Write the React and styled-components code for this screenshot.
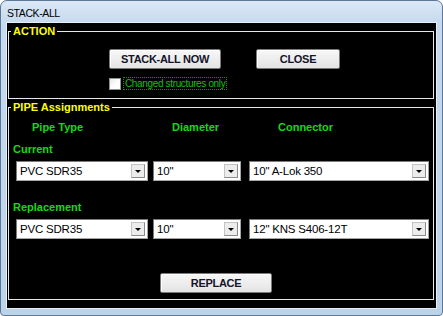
import React from 'react';
import styled, { createGlobalStyle } from 'styled-components';

const Global = createGlobalStyle`
    html, body {
        margin: 0;
        padding: 0;
        background: #ffffff;
    }
    * {
        box-sizing: border-box;
    }
`

const Window = styled.div`
    width: 443px;
    height: 316px;
    display: flex;
    flex-direction: column;
    padding: 0 6px 7px 6px;
    border: 1px solid #5d7896;
    border-radius: 7px 7px 4px 4px;
    background: linear-gradient(to bottom, #dbe8f6 0px, #c6d9ee 22px, #bdd3ea 100%);
    font-family: "Liberation Sans", Arial, sans-serif;
`

const TitleBar = styled.div`
    height: 22px;
    display: flex;
    align-items: center;
    padding-top: 2px;
    font-size: 10.5px;
    letter-spacing: -0.4px;
    color: #000;
`

const Client = styled.div`
    flex: 1;
    display: flex;
    flex-direction: column;
    background: #000;
    padding: 0 2px 0 1px;
    outline: 1px solid #e6eef7;
`

const Group = styled.fieldset`
    margin: ${p => p.$top}px 0 0 0;
    padding: 0 0 ${p => p.$bottom}px 0;
    border: 1px solid #e8e8e8;
    min-width: 0;
    display: flex;
    flex-direction: column;
`

const Legend = styled.legend`
    margin-left: 2px;
    padding: 0 2px;
    height: 14px;
    line-height: 14px;
    font-size: 11px;
    font-weight: bold;
    color: #ffff00;
`

const Row = styled.div`
    display: flex;
    align-items: center;
    margin-top: ${p => p.$top || 0}px;
    padding-left: ${p => p.$left || 0}px;
`

const Button = styled.button`
    width: ${p => p.$width}px;
    height: 20px;
    margin: 0 ${p => p.$gap || 0}px 0 0;
    padding: 0;
    border: 1px solid #7a7a7a;
    border-radius: 2px;
    background: linear-gradient(to bottom, #f7f7f7, #e4e4e4);
    box-shadow: inset 1px 1px 0 #ffffff;
    font-family: "Liberation Sans", Arial, sans-serif;
    font-size: 11px;
    font-weight: bold;
    letter-spacing: -0.3px;
    color: #14142a;
`

const CheckBox = styled.span`
    width: 12px;
    height: 12px;
    border: 1px solid #8e8f8f;
    background: linear-gradient(135deg, #e9e9e9, #ffffff 60%);
    margin-right: 2px;
`

const CheckLabel = styled.span`
    height: 13px;
    padding: 0 1px;
    display: flex;
    align-items: center;
    border: 1px dotted #1f8a1f;
    color: #12c012;
    font-size: 10px;
    letter-spacing: -0.35px;
`

const Heading = styled.span`
    width: ${p => p.$width}px;
    padding-left: ${p => p.$indent}px;
    line-height: 14px;
    font-size: 11px;
    font-weight: bold;
    color: #10dc10;
`

const Combo = styled.div`
    width: ${p => p.$width}px;
    height: 20px;
    margin-right: ${p => p.$gap || 0}px;
    display: flex;
    align-items: stretch;
    padding: 2px;
    border: 1px solid #a5a5a5;
    border-top-color: #7b7b7b;
    border-left-color: #7b7b7b;
    background: #ffffff;
`

const ComboText = styled.span`
    flex: 1;
    padding-left: 1px;
    display: flex;
    align-items: center;
    font-size: 11.5px;
    letter-spacing: -0.2px;
    color: #000;
`

const Arrow = styled.span`
    width: 14px;
    display: flex;
    align-items: center;
    justify-content: center;
    border: 1px solid #c3c3c3;
    border-right-color: #8c8c8c;
    border-bottom-color: #8c8c8c;
    background: #ececec;

    &::after {
        content: "";
        border-left: 3px solid transparent;
        border-right: 3px solid transparent;
        border-top: 3px solid #000;
    }
`

function Select({ value, width, gap }) {
    return (
        <Combo $width={width} $gap={gap}>
            <ComboText>{value}</ComboText>
            <Arrow />
        </Combo>
    )
}

function PipeRow({ top, pipe, diameter, connector }) {
    return (
        <Row $top={top} $left={7}>
            <Select value={pipe} width={132} gap={5} />
            <Select value={diameter} width={88} gap={8} />
            <Select value={connector} width={180} />
        </Row>
    )
}

export default function App() {
    return (
        <>
            <Global />
            <Window>
                <TitleBar>STACK-ALL</TitleBar>
                <Client>
                    <Group $top={1} $bottom={8}>
                        <Legend>ACTION</Legend>
                        <Row $top={11} $left={100}>
                            <Button $width={112} $gap={35}>STACK-ALL NOW</Button>
                            <Button $width={84}>CLOSE</Button>
                        </Row>
                        <Row $top={8} $left={100}>
                            <CheckBox />
                            <CheckLabel>Changed structures only</CheckLabel>
                        </Row>
                    </Group>
                    <Group $top={1} $bottom={6}>
                        <Legend>PIPE Assignments</Legend>
                        <Row $top={6} $left={7}>
                            <Heading $width={137} $indent={16}>Pipe Type</Heading>
                            <Heading $width={96} $indent={19}>Diameter</Heading>
                            <Heading $width={180} $indent={29}>Connector</Heading>
                        </Row>
                        <Row $top={8} $left={4}>
                            <Heading $width={100} $indent={0}>Current</Heading>
                        </Row>
                        <PipeRow top={5} pipe="PVC SDR35" diameter={'10"'} connector={'10" A-Lok 350'} />
                        <Row $top={19} $left={4}>
                            <Heading $width={100} $indent={0}>Replacement</Heading>
                        </Row>
                        <PipeRow top={5} pipe="PVC SDR35" diameter={'10"'} connector={'12" KNS S406-12T'} />
                        <Row $top={34} $left={151}>
                            <Button $width={112}>REPLACE</Button>
                        </Row>
                    </Group>
                </Client>
            </Window>
        </>
    )
}
